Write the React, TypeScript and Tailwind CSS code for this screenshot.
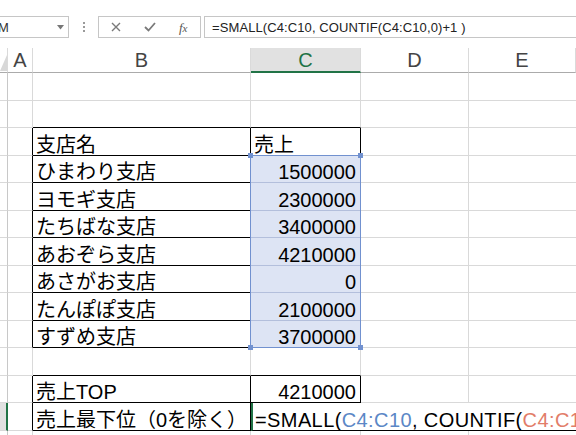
import React from 'react';

type Row = { h: number; b?: string; c?: string; cLeft?: boolean };

const rows: Row[] = [
  { h: 28 },
  { h: 27 },
  { h: 28, b: '支店名', c: '売上', cLeft: true },
  { h: 27, b: 'ひまわり支店', c: '1500000' },
  { h: 28, b: 'ヨモギ支店', c: '2300000' },
  { h: 27, b: 'たちばな支店', c: '3400000' },
  { h: 28, b: 'あおぞら支店', c: '4210000' },
  { h: 27, b: 'あさがお支店', c: '0' },
  { h: 28, b: 'たんぽぽ支店', c: '2100000' },
  { h: 27, b: 'すずめ支店', c: '3700000' },
  { h: 28 },
  { h: 27, b: '売上TOP', c: '4210000' },
  { h: 28, b: '売上最下位（0を除く）' },
  { h: 10 },
];

const inTable = (r: number) => (r >= 3 && r <= 10) || r === 12 || r === 13;
const inSel = (r: number) => r >= 4 && r <= 10;

function TopBar() {
  return (
    <div className="h-[48px] pt-[16px] flex items-start font-['Liberation_Sans',sans-serif]">
      <div className="relative w-[70px] h-[22px] ml-[-1px] border border-[#c6c6c6] flex items-center overflow-hidden shrink-0">
        <span className="ml-[-20px] text-[13px] text-[#333] leading-none">SUM</span>
        <svg className="absolute left-[57px] top-[8px]" width="7" height="5" viewBox="0 0 7 5">
          <polygon points="0,0 7,0 3.5,4.5" fill="#777" />
        </svg>
      </div>
      <div className="w-[29px] h-[22px] flex flex-col items-center justify-center gap-[2px] shrink-0">
        <div className="w-[2px] h-[2px] bg-[#9a9a9a]" />
        <div className="w-[2px] h-[2px] bg-[#9a9a9a]" />
        <div className="w-[2px] h-[2px] bg-[#9a9a9a]" />
      </div>
      <div className="w-[103px] h-[22px] border border-[#c6c6c6] flex items-center shrink-0">
        <div className="w-[34px] flex justify-center">
          <svg width="10" height="10" viewBox="0 0 10 10">
            <path d="M1 1 L9 9 M9 1 L1 9" stroke="#7a7a7a" strokeWidth="1.4" />
          </svg>
        </div>
        <div className="w-[34px] flex justify-center">
          <svg width="12" height="10" viewBox="0 0 12 10">
            <path d="M1 5 L4.5 8.5 L11 1" stroke="#7a7a7a" strokeWidth="1.8" fill="none" />
          </svg>
        </div>
        <div className="w-[34px] flex justify-center">
          <span className="font-['Liberation_Serif',serif] italic text-[13px] text-[#555] leading-none">
            f<span className="text-[11px]">x</span>
          </span>
        </div>
      </div>
      <div className="flex-1 h-[22px] ml-[3px] mr-[-2px] border border-[#c6c6c6] flex items-center pl-[7px] overflow-hidden">
        <span className="text-[13px] text-[#222] leading-none whitespace-nowrap tracking-[0.1px]">
          =SMALL(C4:C10, COUNTIF(C4:C10,0)+1 )
        </span>
      </div>
    </div>
  );
}

function Header() {
  const base =
    "h-[25px] border-r border-b border-r-[#dadada] border-b-[#ababab] flex items-center justify-center text-[20px] text-[#444] leading-none shrink-0";
  return (
    <div className="flex h-[25px]">
      <div className="relative w-[8px] h-[25px] border-r border-b border-r-[#dadada] border-b-[#ababab] shrink-0 bg-white">
        <svg className="absolute left-0 top-0" width="8" height="24" viewBox="0 0 8 24">
          <polygon points="7,7 7,23 0,23" fill="#d8d8d8" />
        </svg>
      </div>
      <div className={`${base} w-[25px]`}>A</div>
      <div className={`${base} w-[218px]`}>B</div>
      <div className="h-[25px] w-[110px] shrink-0 bg-[#e1e1e1] border-r border-r-[#dadada] border-b-2 border-b-[#217346] flex items-center justify-center text-[20px] text-[#217346] leading-none">
        C
      </div>
      <div className={`${base} w-[108px]`}>D</div>
      <div className={`${base} flex-1`}>E</div>
    </div>
  );
}

export default function App() {
  return (
    <div className="relative w-[576px] h-[435px] overflow-hidden bg-white font-['Liberation_Sans','Noto_Sans_CJK_JP',sans-serif] text-black">
      <TopBar />
      <Header />
      {rows.map((row, i) => {
        const r = i + 1;
        const t = inTable(r);
        const hCls = row.h === 28 ? 'h-[28px]' : row.h === 27 ? 'h-[27px]' : 'h-[10px]';
        const rh =
          r === 13
            ? 'bg-[#e1e1e1] border-r-2 border-r-[#217346]'
            : 'bg-white border-r border-r-[#c8c8c8]';
        const aR = t ? 'border-r-black' : 'border-r-[#d9d9d9]';
        const bR = t ? 'border-r-black' : 'border-r-[#d9d9d9]';
        const bB = t || r === 2 || r === 11 ? 'border-b-black' : 'border-b-[#d9d9d9]';
        const cR = t ? 'border-r-black' : 'border-r-[#d9d9d9]';
        const cB =
          r === 2 || r === 3 || r === 10 || r === 11 || r === 12 || r === 13
            ? 'border-b-black'
            : inSel(r)
            ? 'border-b-[#b3bfdc]'
            : 'border-b-[#d9d9d9]';
        const cBg = inSel(r) ? 'bg-[#dde4f4]' : 'bg-white';
        return (
          <div key={r} className={`flex ${hCls}`}>
            <div className={`w-[8px] shrink-0 border-b border-b-[#d9d9d9] ${rh}`} />
            <div className={`w-[25px] shrink-0 border-r border-b border-b-[#d9d9d9] ${aR}`} />
            <div
              className={`w-[218px] shrink-0 border-r border-b ${bR} ${bB} flex items-end pl-[3px] text-[20px] leading-[20px] whitespace-nowrap`}
            >
              {row.b}
            </div>
            {r === 13 ? (
              <div className="flex-1 min-w-0 border-l-2 border-l-[#217346] border-b border-b-black flex items-end pl-[2px] text-[20px] leading-[20px] whitespace-nowrap overflow-hidden bg-white tracking-[0.4px]">
                <span>=SMALL(</span>
                <span className="text-[#5b87c6]">C4:C10</span>
                <span>, COUNTIF(</span>
                <span className="text-[#e27d69]">C4:C10</span>
                <span>,0)+1 )</span>
              </div>
            ) : (
              <>
                <div
                  className={`w-[110px] shrink-0 border-r border-b ${cR} ${cB} ${cBg} flex items-end ${
                    row.cLeft ? 'justify-start pl-[3px]' : 'justify-end pr-[4px]'
                  } text-[20px] leading-[20px] whitespace-nowrap`}
                >
                  {row.c}
                </div>
                <div className="w-[108px] shrink-0 border-r border-b border-r-[#d9d9d9] border-b-[#d9d9d9]" />
                <div className="flex-1 border-b border-b-[#d9d9d9]" />
              </>
            )}
          </div>
        );
      })}
      {/* selection overlay */}
      <div className="absolute left-[250px] top-[155px] w-[111px] h-[193px] border border-[#7191cf] pointer-events-none" />
      <div className="absolute left-[248px] top-[153px] w-[5px] h-[5px] bg-[#7191cf]" />
      <div className="absolute left-[358px] top-[153px] w-[5px] h-[5px] bg-[#7191cf]" />
      <div className="absolute left-[248px] top-[345px] w-[5px] h-[5px] bg-[#7191cf]" />
      <div className="absolute left-[358px] top-[345px] w-[5px] h-[5px] bg-[#7191cf]" />
    </div>
  );
}
